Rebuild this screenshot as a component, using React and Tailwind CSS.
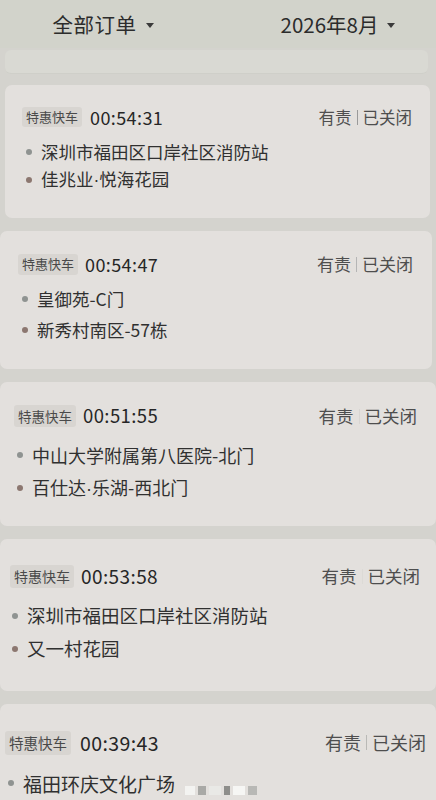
import React from 'react';

const orders = [
  {
    time: '00:54:31',
    from: '深圳市福田区口岸社区消防站',
    to: '佳兆业·悦海花园',
    box: 'ml-[5px] mr-[6px] h-[133px] pt-[22px] pl-[17px] pr-[18px]',
    head: 'h-[20px]',
    tag: 'text-[13px] h-[20px] px-[4px]',
    time_: 'text-[18px] ml-[8px]',
    status: 'text-[16.5px]',
    addr: 'text-[17.5px] h-[28px] pl-[4px]',
    list: 'mt-[11px]',
    sep: 'bg-[#9a9a9a]'
  },
  {
    time: '00:54:47',
    from: '皇御苑-C门',
    to: '新秀村南区-57栋',
    box: 'ml-0 mr-[4px] h-[138px] pt-[23px] pl-[18px] pr-[19px]',
    head: 'h-[20px]',
    tag: 'text-[13px] h-[21px] px-[4px]',
    time_: 'text-[18px] ml-[7px]',
    status: 'text-[17px]',
    addr: 'text-[17.5px] h-[31px] pl-[4px]',
    list: 'mt-[9px]',
    sep: 'bg-[#b5b5b5]'
  },
  {
    time: '00:51:55',
    from: '中山大学附属第八医院-北门',
    to: '百仕达·乐湖-西北门',
    box: 'ml-0 mr-0 h-[144px] pt-[23px] pl-[14px] pr-[19px]',
    head: 'h-[22px]',
    tag: 'text-[13.5px] h-[22px] px-[4px]',
    time_: 'text-[18.5px] ml-[7px]',
    status: 'text-[17.5px]',
    addr: 'text-[18px] h-[33px] pl-[3px]',
    list: 'mt-[11px]',
    sep: 'bg-[#d8d5d2]'
  },
  {
    time: '00:53:58',
    from: '深圳市福田区口岸社区消防站',
    to: '又一村花园',
    box: 'ml-0 mr-0 h-[152px] pt-[26px] pl-[10px] pr-[16px]',
    head: 'h-[22px]',
    tag: 'text-[14px] h-[23px] px-[4px]',
    time_: 'text-[19px] ml-[7px]',
    status: 'text-[17.5px]',
    addr: 'text-[18.5px] h-[33px] pl-[2px]',
    list: 'mt-[12px]',
    sep: 'bg-[#dcdad6]'
  },
  {
    time: '00:39:43',
    from: '福田环庆文化广场',
    to: null,
    box: 'ml-0 mr-0 h-[140px] pt-[27px] pl-[5px] pr-[10px]',
    head: 'h-[23px]',
    tag: 'text-[14.5px] h-[24px] px-[4px]',
    time_: 'text-[19.5px] ml-[9px]',
    status: 'text-[18px]',
    addr: 'text-[19px] h-[34px] pl-[3px]',
    list: 'mt-[12px]',
    sep: 'bg-[#b9b9b6]'
  }
];

const Caret = () => (
  <svg width="8" height="5" viewBox="0 0 8 5" className="ml-[9px] mt-[3px]">
    <path d="M0 0h8L4 5z" fill="#3a3a3a" />
  </svg>
);

// split on the middle dot so it can be drawn narrow, as in the app
const AddrText = ({ text }) => {
  const parts = text.split('·');
  return parts.map((p, i) => (
    <React.Fragment key={i}>
      {i > 0 && <span style={{ fontFamily: '"Liberation Sans", sans-serif' }}>·</span>}
      {p}
    </React.Fragment>
  ));
};

const Address = ({ text, dot, cls, blur }) => (
  <div className={`flex items-center ${cls}`}>
    <span className={`w-[6px] h-[6px] rounded-full ${dot}`} />
    <span className="ml-[9px] text-[#303030] leading-none">
      <AddrText text={text} />
    </span>
    {blur && (
      <span className="ml-[10px] mt-[14px] flex gap-[3px]">
        <span className="w-[10px] h-[9px] bg-[#f3f3f1]" />
        <span className="w-[8px] h-[9px] bg-[#a9a9a6]" />
        <span className="w-[12px] h-[9px] bg-[#e9e9e6]" />
        <span className="w-[6px] h-[9px] bg-[#8e8e8b]" />
        <span className="w-[12px] h-[9px] bg-[#f6f6f4]" />
        <span className="w-[9px] h-[9px] bg-[#b8b8b5]" />
      </span>
    )}
  </div>
);

const OrderCard = ({ o, last }) => (
  <div className={`rounded-[7px] bg-[#e3e0dd] ${o.box}`}>
    <div className={`flex items-center justify-between ${o.head}`}>
      <div className="flex items-center">
        <span className={`flex items-center rounded-[3px] bg-[#d8d5d1] text-[#4a4a4a] ${o.tag}`}>特惠快车</span>
        <span className={`text-[#262626] tracking-[0.4px] ${o.time_}`}>{o.time}</span>
      </div>
      <div className={`flex items-center text-[#4e4e4e] ${o.status}`}>
        <span>有责</span>
        <span className={`mx-[5px] w-px h-[15px] ${o.sep}`} />
        <span>已关闭</span>
      </div>
    </div>
    <div className={o.list}>
      <Address text={o.from} dot="bg-[#8f9391]" cls={o.addr} blur={last} />
      {o.to && <Address text={o.to} dot="bg-[#8c7770]" cls={o.addr} />}
    </div>
  </div>
);

export default function App() {
  return (
    <div
      className="w-[436px] h-[800px] overflow-hidden bg-[#d4d3ce]"
      style={{ fontFamily: '"Noto Sans CJK SC", "Noto Sans", sans-serif' }}
    >
      <div className="h-[48px] grid grid-cols-2 bg-[#d2d3cb]">
        <div className="flex items-center justify-center pr-[12px]">
          <span className="text-[20.5px] text-[#2c2c2c] tracking-[0.5px]">全部订单</span>
          <Caret />
        </div>
        <div className="flex items-center justify-center pl-[22px]">
          <span className="text-[20.5px] text-[#2c2c2c]">2026年8月</span>
          <Caret />
        </div>
      </div>
      <div className="mt-[2px] ml-[5px] mr-[8px] h-[24px] rounded-[6px] bg-[#d9d9d3] border-b border-[#cfcfc9]" />
      <div className="mt-[11px] flex flex-col gap-[13px]">
        {orders.map((o, i) => (
          <OrderCard key={i} o={o} last={i === orders.length - 1} />
        ))}
      </div>
    </div>
  );
}
